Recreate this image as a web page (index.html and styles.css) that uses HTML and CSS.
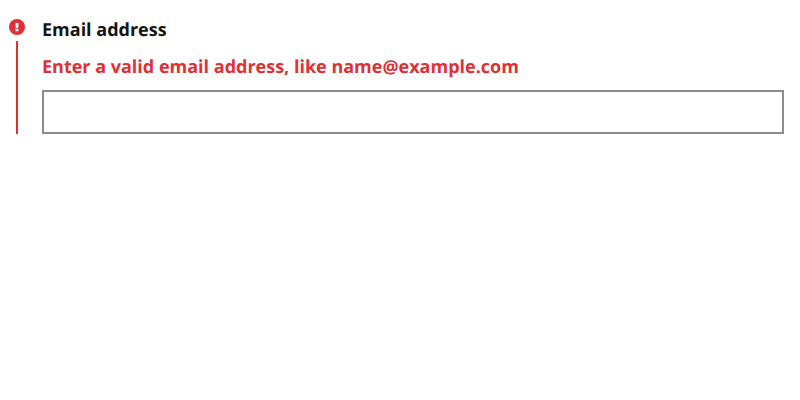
FILE: index.html
```
<!DOCTYPE html>
<html lang="en">
<head>
<meta charset="utf-8">
<title>Email address</title>
<link rel="stylesheet" href="styles.css">
</head>
<body>
<div class="field">
  <div class="marker">
    <svg class="icon" viewBox="0 0 16 16" aria-hidden="true"><circle cx="8" cy="8" r="8" fill="#e03034"/><path d="M6.4 4h3.2l-.4 4.9H6.8zM6.6 9.8h2.8v2.4H6.6z" fill="#fff"/></svg>
    <span class="line"></span>
  </div>
  <div class="content">
    <label class="label" for="email">Email address</label>
    <p class="error" id="email-error">Enter a valid email address, like name@example.com</p>
    <input class="input" id="email" type="email" aria-describedby="email-error">
  </div>
</div>
</body>
</html>
```
FILE: styles.css
```
body {
  margin: 0;
  padding: 16px 16px 16px 9px;
  background: #fff;
  font-family: "Open Sans", sans-serif;
  text-rendering: geometricPrecision;
}
.field {
  display: flex;
  gap: 17px;
}
.marker {
  display: flex;
  flex-direction: column;
  align-items: center;
  width: 16px;
  padding-top: 3px;
}
.icon {
  display: block;
  width: 16px;
  height: 16px;
}
.line {
  flex: 1;
  width: 2px;
  margin-top: 6px;
  background: #e03034;
}
.content {
  flex: 1;
  padding-top: 1px;
}
.label,
.error {
  display: block;
  margin: 0;
  font-size: 18px;
  font-weight: 700;
  line-height: 27px;
}
.label {
  color: #141414;
}
.error {
  margin: 10px 0 9px;
  color: #e03034;
}
.input {
  display: block;
  box-sizing: border-box;
  width: 100%;
  height: 44px;
  padding: 0 8px;
  border: 2px solid #898b8e;
  border-radius: 0;
  background: #fff;
  font: inherit;
}
```
